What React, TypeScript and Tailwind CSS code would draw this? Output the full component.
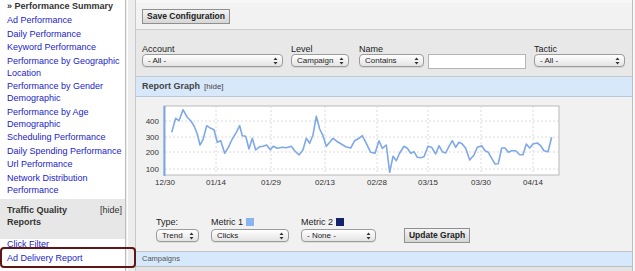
const links = [
  "Ad Performance",
  "Daily Performance",
  "Keyword Performance",
  "Performance by Geographic Location",
  "Performance by Gender Demographic",
  "Performance by Age Demographic",
  "Scheduling Performance",
  "Daily Spending Performance",
  "Url Performance",
  "Network Distribution Performance",
];

const points: [number, number][] = [
  [172.7, 133.3], [176.7, 119.3], [180, 121.7], [184, 110.7], [188.3, 118.3], [191.7, 121.7],
  [195, 126.7], [198.3, 135], [201, 146], [204, 140.7], [207.7, 126.7], [211.7, 129.3],
  [215, 130.7], [218.3, 143.3], [221.7, 141.7], [225.7, 154.3], [229.3, 148.3], [233.3, 140],
  [237.3, 133.3], [240.7, 126.7], [243.3, 136.7], [246.7, 137.3], [250, 150], [253.3, 139.3],
  [256.7, 151], [260.7, 147.7], [264, 147.3], [267.7, 146], [271.3, 150.7], [274.3, 147.3],
  [278.3, 149.3], [283.3, 148.3], [287.3, 148.7], [292.3, 147.3], [295.7, 151.7], [300, 156],
  [304, 150.7], [307.3, 139.3], [310.7, 144.3], [314, 136], [317.3, 117.3], [320.7, 130],
  [324, 136.7], [327.3, 147.3], [330.7, 143.3], [334, 139.3], [338.3, 142.7], [342.3, 145],
  [346.7, 147.7], [351.7, 149], [355.7, 141.7], [360, 139.3], [363.3, 136.7], [367.3, 144.3],
  [371.7, 153.3], [376, 154.3], [380, 141.7], [383.3, 149.3], [387.3, 146], [390.7, 173.3],
  [394, 157.3], [397.3, 161.7], [400.7, 154], [405, 147.3], [408.3, 149.3], [411.7, 154.3],
  [415, 152.7], [418.3, 158.3], [421.7, 158.7], [425, 157.7], [429, 147.3], [432.7, 148.3],
  [436.7, 155], [440, 146.7], [443.3, 152.7], [446.7, 154], [450, 147.3], [453.3, 141.7],
  [456.7, 148.3], [460, 143.3], [463.3, 145], [466.7, 149.3], [470.7, 161], [475, 156],
  [478.3, 148.3], [482.7, 146.7], [486, 151.7], [489.3, 153.3], [492.7, 159.3], [496, 165],
  [499.3, 164.7], [502.7, 149], [506, 149], [509.3, 153.3], [512.7, 151.7], [516.7, 151.7],
  [520.7, 155.7], [524, 155.7], [527.3, 145], [530.7, 149], [534, 145], [538.3, 144],
  [541.7, 146.7], [545, 151.7], [549, 152.7], [552.7, 138.3],
];

const yTicks: [string, number][] = [["400", 122], ["300", 138], ["200", 153], ["100", 170]];
const xTicks: [string, number][] = [
  ["12/30", 166], ["01/14", 217], ["01/29", 272], ["02/13", 326],
  ["02/28", 378], ["03/15", 429], ["03/30", 482], ["04/14", 534],
];

function Arrows() {
  return (
    <svg width="5" height="8" viewBox="0 0 5 8" className="shrink-0">
      <path d="M2.5 0.5 L4.5 3 L0.5 3 Z M2.5 7.5 L4.5 5 L0.5 5 Z" fill="#333" />
    </svg>
  );
}

function Select({ value, className }: { value: string; className: string }) {
  return (
    <div
      className={
        "flex h-[13px] items-center justify-between rounded-[4px] border border-[#9b9b9b] bg-gradient-to-b from-white to-[#e4e4e4] pl-[5px] pr-[4px] text-[8px] leading-none whitespace-nowrap text-[#222] shadow-[0_1px_0_rgba(0,0,0,0.08)] " +
        className
      }
    >
      <span>{value}</span>
      <Arrows />
    </div>
  );
}

function Button({ children, className }: { children: string; className?: string }) {
  return (
    <div
      className={
        "flex h-[15px] items-center justify-center border border-[#8f8f8f] bg-gradient-to-b from-[#f4f4f4] to-[#d6d6d6] text-[8.5px] font-bold leading-none whitespace-nowrap text-[#222] " +
        (className ?? "")
      }
    >
      {children}
    </div>
  );
}

function Chart() {
  const d = points.map((p, i) => (i ? "L" : "M") + p[0] + " " + p[1]).join(" ");
  return (
    <svg width="430" height="92" viewBox="143 100 430 92" className="block">
      <rect x="165" y="107" width="395" height="69" fill="#fff" stroke="#b9b9b9" />
      {yTicks.map(([l, y]) => (
        <line key={l} x1="166" x2="560" y1={y} y2={y} stroke="#dadada" strokeDasharray="2 2" />
      ))}
      {xTicks.slice(1).map(([l, x]) => (
        <line key={l} x1={x} x2={x} y1="107" y2="176" stroke="#dadada" strokeDasharray="2 2" />
      ))}
      <line x1="165.5" x2="165.5" y1="107" y2="177" stroke="#7ea6e4" strokeWidth="2" />
      <path d={d} fill="none" stroke="#7fa8e8" strokeWidth="1.6" strokeLinejoin="round" />
      {yTicks.map(([l, y]) => (
        <text key={l} x="160" y={y + 3} textAnchor="end" fontSize="8" fill="#333" fontFamily="'Liberation Sans', Arial, sans-serif">
          {l}
        </text>
      ))}
      {xTicks.map(([l, x]) => (
        <text key={l} x={x} y="186" textAnchor="middle" fontSize="8" fill="#333" fontFamily="'Liberation Sans', Arial, sans-serif">
          {l}
        </text>
      ))}
    </svg>
  );
}

export default function App() {
  return (
    <div className="relative flex h-[271px] w-[635px] overflow-hidden bg-white font-['Liberation_Sans',Arial,sans-serif] text-[9px]">
      {/* sidebar */}
      <aside className="flex w-[125px] flex-col bg-white">
        <div className="pl-[7px] leading-[12px] font-bold text-[#333]">» Performance Summary</div>
        <ul className="mt-[2px] flex flex-col gap-[1.5px] pl-[7px] pr-[3px] leading-[12px] text-[#2323c8]">
          {links.map((l) => (
            <li key={l}>{l}</li>
          ))}
        </ul>
        <div className="mt-[3px] flex h-[40px] justify-between bg-[#e7e7e7] pt-[5px] pl-[7px] pr-[3px] leading-[12px] text-[#333]">
          <span className="font-bold">
            Traffic Quality
            <br />
            Reports
          </span>
          <span>[hide]</span>
        </div>
        <div className="mt-[-1px] flex flex-col gap-[2px] pl-[7px] leading-[12px] text-[#2323c8]">
          <span>Click Filter</span>
          <span>Ad Delivery Report</span>
        </div>
      </aside>

      {/* gutter */}
      <div className="flex w-[11px] border-l border-[#bdbdbd] bg-[#ececec]">
        <div className="ml-[1px] w-[1px] bg-white" />
        <div className="ml-auto w-[1px] bg-[#c9c9c9]" />
      </div>

      {/* main */}
      <main className="flex w-[497px] flex-col border-r border-[#bdbdbd]">
        <div className="h-[30px] border-t-[3px] border-b border-[#cdcdcd] border-t-[#f7f7f7] bg-[#f2f2f2] pt-[6px] pl-[6px]">
          <Button className="w-[88px]">Save Configuration</Button>
        </div>

        <div className="flex h-[47px] border-b border-[#c9c9c9] bg-[#e8e8e8] pt-[14px] pl-[6px] leading-[10px] text-[#222]">
          <div className="w-[149px]">
            <div>Account</div>
            <Select value="- All -" className="w-[141px]" />
          </div>
          <div className="w-[68px]">
            <div>Level</div>
            <Select value="Campaign" className="w-[58px]" />
          </div>
          <div className="w-[175px]">
            <div>Name</div>
            <div className="flex items-start gap-[4px]">
              <Select value="Contains" className="w-[65px]" />
              <div className="h-[15px] w-[98px] border border-[#b5b5b5] bg-white" />
            </div>
          </div>
          <div className="w-[91px]">
            <div>Tactic</div>
            <Select value="- All -" className="w-[91px]" />
          </div>
        </div>

        <div className="flex h-[20px] items-center gap-[4px] border-b border-[#b7c8dc] bg-[#d7e8fb] pl-[6px] text-[#444]">
          <span className="font-bold">Report Graph</span>
          <span className="text-[8px]">[hide]</span>
        </div>

        <div className="h-[155px] border-b border-[#c4c4c4] bg-[#f1f1f1] pt-[2px] pl-[6px]">
          <Chart />
          <div className="mt-[26px] flex items-end pl-[14px] leading-[10px] text-[#222]">
            <div className="w-[55px]">
              <div className="mb-[2px]">Type:</div>
              <Select value="Trend" className="w-[43px]" />
            </div>
            <div className="w-[90px]">
              <div className="mb-[2px] flex items-center gap-[3px]">
                Metric 1<span className="h-[8px] w-[8px] bg-[#8ab4ee]" />
              </div>
              <Select value="Clicks" className="w-[78px]" />
            </div>
            <div className="w-[103px]">
              <div className="mb-[2px] flex items-center gap-[3px]">
                Metric 2<span className="h-[8px] w-[8px] bg-[#12226b]" />
              </div>
              <Select value="- None -" className="w-[75px]" />
            </div>
            <Button className="mb-[-1px] w-[66px]">Update Graph</Button>
          </div>
        </div>

        <div className="flex h-[15px] items-center border-b border-[#bfbfbf] bg-[#d6e8fb] pl-[6px] text-[7.5px] text-[#555]">
          Campaigns
        </div>
        <div className="flex-1 bg-[#e4e4e4]" />
      </main>
      <div className="flex-1 bg-[#f7f7f7]" />

      {/* highlight */}
      <div className="absolute left-0 top-[247px] h-[21px] w-[136px] rounded-[4px] border-2 border-[#5e1717]" />
    </div>
  );
}
